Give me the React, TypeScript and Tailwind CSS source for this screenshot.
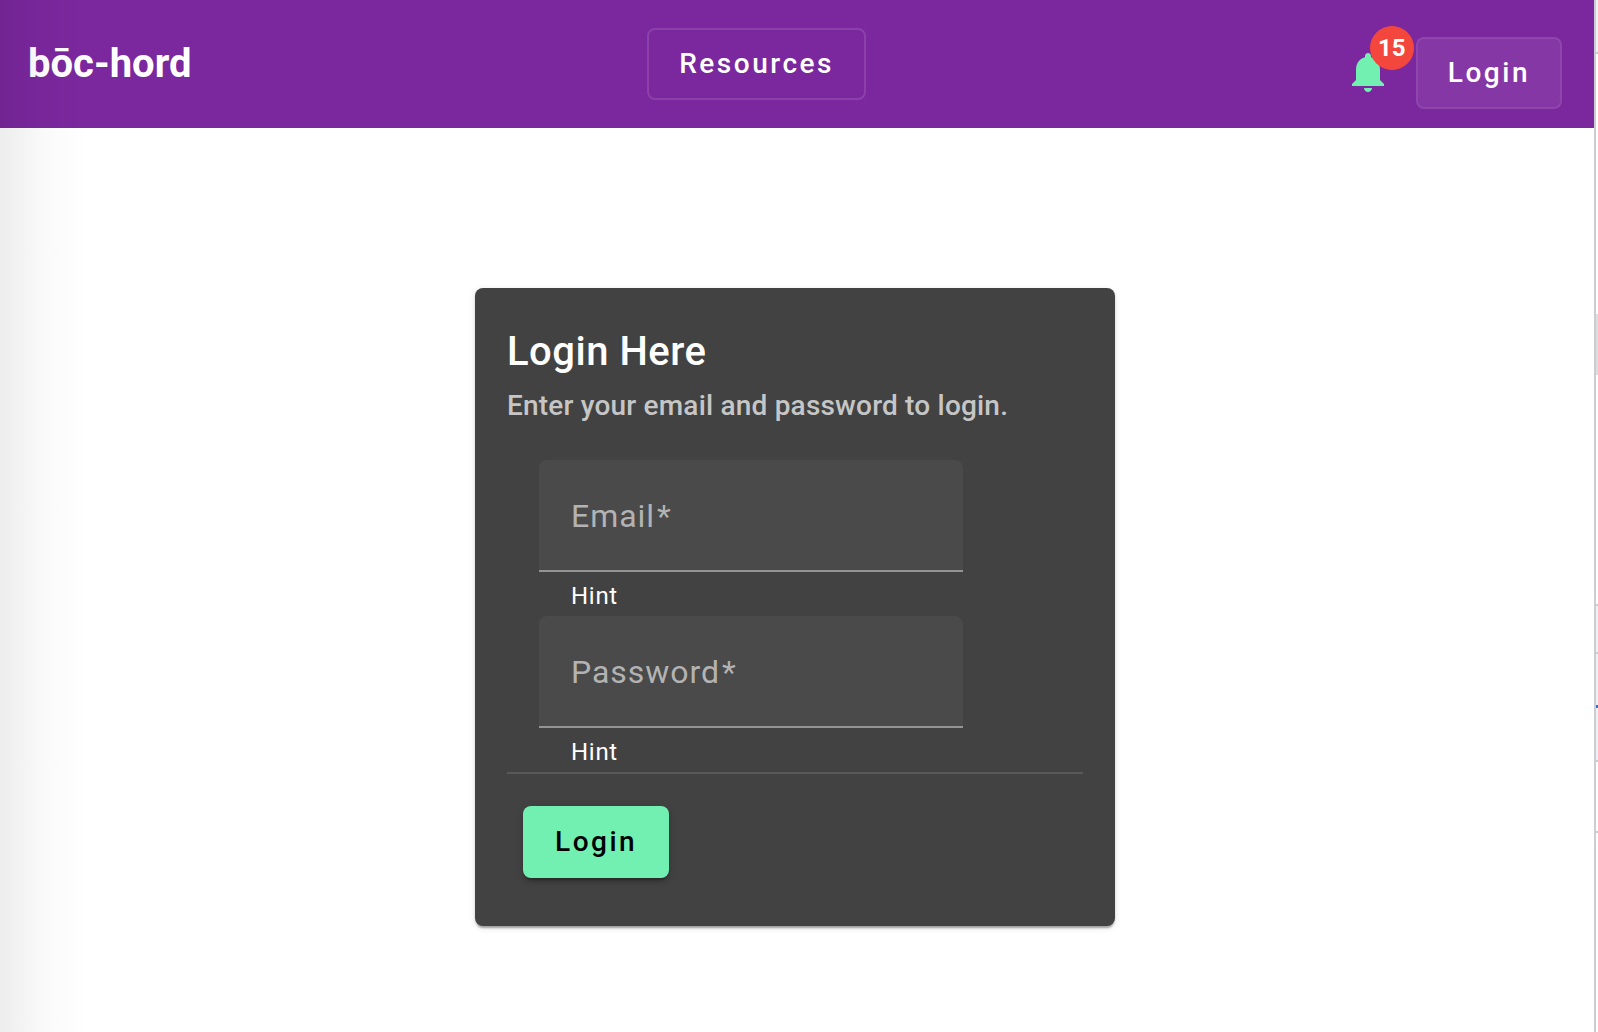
import React from "react";

type FieldProps = { id: string; label: string; type: string };

function Field({ id, label, type }: FieldProps) {
  return (
    <div className="relative w-[424px] max-w-full">
      <input
        id={id}
        type={type}
        required
        placeholder=" "
        aria-describedby={`${id}-hint`}
        className="peer block h-28 w-full rounded-t-lg border-b-2 border-[#949494] bg-[#4a4a4a] px-8 pt-8 text-[32px] tracking-[0.03em] text-white outline-none"
      />
      <label
        htmlFor={id}
        className="pointer-events-none absolute top-0 left-8 text-2xl leading-[48px] tracking-[0.03em] text-[#b3b3b3] peer-placeholder-shown:text-[32px] peer-placeholder-shown:leading-[112px] peer-focus:text-2xl peer-focus:leading-[48px]"
      >
        {label}
        <span className="ml-0.5">*</span>
      </label>
      <p id={`${id}-hint`} className="px-8 pt-2 pb-1 text-2xl leading-8 tracking-[0.03em] text-white">
        Hint
      </p>
    </div>
  );
}

function Header() {
  return (
    <header className="flex h-32 items-center justify-between bg-[#7b279e] pr-8 pl-7 text-white">
      <h1 className="text-[40px] leading-none font-bold">bōc-hord</h1>
      <button
        type="button"
        className="h-[72px] rounded-lg border-2 border-white/12 px-[30px] text-[28px] font-medium tracking-[0.09em]"
      >
        Resources
      </button>
      <div className="flex items-center gap-6 pt-[18px] pl-[22px]">
        <button type="button" aria-label="Notifications, 15 unread" className="relative w-12 pb-0.5 text-[#72f0b1]">
          <svg viewBox="0 0 24 24" className="size-12" fill="currentColor" aria-hidden="true">
            <path d="M12 22c1.1 0 2-.9 2-2h-4c0 1.1.89 2 2 2zm6-6v-5c0-3.07-1.64-5.64-4.5-6.32V4c0-.83-.67-1.5-1.5-1.5s-1.5.67-1.5 1.5v.68C7.63 5.36 6 7.92 6 11v5l-2 2v1h16v-1l-2-2z" />
          </svg>
          <span className="absolute -top-[22px] -right-[22px] flex size-11 items-center justify-center rounded-full bg-[#f3473e] text-2xl font-bold text-white">
            15
          </span>
        </button>
        <button
          type="button"
          className="h-[72px] rounded-lg border-2 border-white/8 bg-[#8537a5] px-[30px] text-[28px] font-medium tracking-[0.09em]"
        >
          Login
        </button>
      </div>
    </header>
  );
}

function LoginCard() {
  return (
    <form
      onSubmit={(event) => event.preventDefault()}
      className="w-[640px] max-w-full rounded-lg bg-[#424242] px-8 pt-8 pb-12 shadow-[0_4px_2px_-2px_rgba(0,0,0,0.2),0_2px_2px_0_rgba(0,0,0,0.14),0_2px_6px_0_rgba(0,0,0,0.12)]"
    >
      <h2 className="text-[40px] leading-[64px] font-medium tracking-[0.0125em] text-white">Login Here</h2>
      <p className="text-[28px] leading-[44px] font-medium tracking-[0.007em] text-[#c6c6c6]">
        Enter your email and password to login.
      </p>
      <div className="px-8 pt-8">
        <Field id="email" label="Email" type="email" />
        <Field id="password" label="Password" type="password" />
      </div>
      <hr className="border-t-2 border-[#585858]" />
      <div className="px-4 pt-8">
        <button
          type="submit"
          className="h-[72px] rounded-lg bg-[#72f0b1] px-8 text-[28px] font-medium tracking-[0.09em] text-black shadow-[0_6px_2px_-4px_rgba(0,0,0,0.2),0_4px_4px_0_rgba(0,0,0,0.14),0_2px_10px_0_rgba(0,0,0,0.12)]"
        >
          Login
        </button>
      </div>
    </form>
  );
}

function AdjacentPanel() {
  return (
    <aside className="flex w-1 shrink-0 flex-col border-l-2 border-[#caced2] bg-white">
      <div className="h-[54px] border-b-2 border-[#caccd0] bg-[#f0f2f5]" />
      <div className="mt-[260px] h-[61px] bg-[#dedede]" />
      <div className="mt-[229px] h-[50px] border-y-2 border-[#caccd0] bg-[#f0f1f2]" />
      <div className="h-[51px] bg-[#eff0f3]" />
      <div className="h-[3px] bg-[#2b74e0]" />
      <div className="h-[54px] border-b-2 border-[#caccd0] bg-[#eff0f3]" />
      <div className="h-[71px] border-b-2 border-[#caccd0]" />
    </aside>
  );
}

export default function App() {
  return (
    <div className="flex min-h-screen bg-white font-[Roboto,sans-serif] antialiased">
      <div className="relative min-w-0 flex-1">
        <Header />
        <main className="flex justify-center pt-40 pr-1">
          <LoginCard />
        </main>
        <div className="pointer-events-none absolute inset-y-0 left-0 w-22 bg-linear-to-r from-black/7 via-black/2 to-transparent" />
      </div>
      <AdjacentPanel />
    </div>
  );
}
